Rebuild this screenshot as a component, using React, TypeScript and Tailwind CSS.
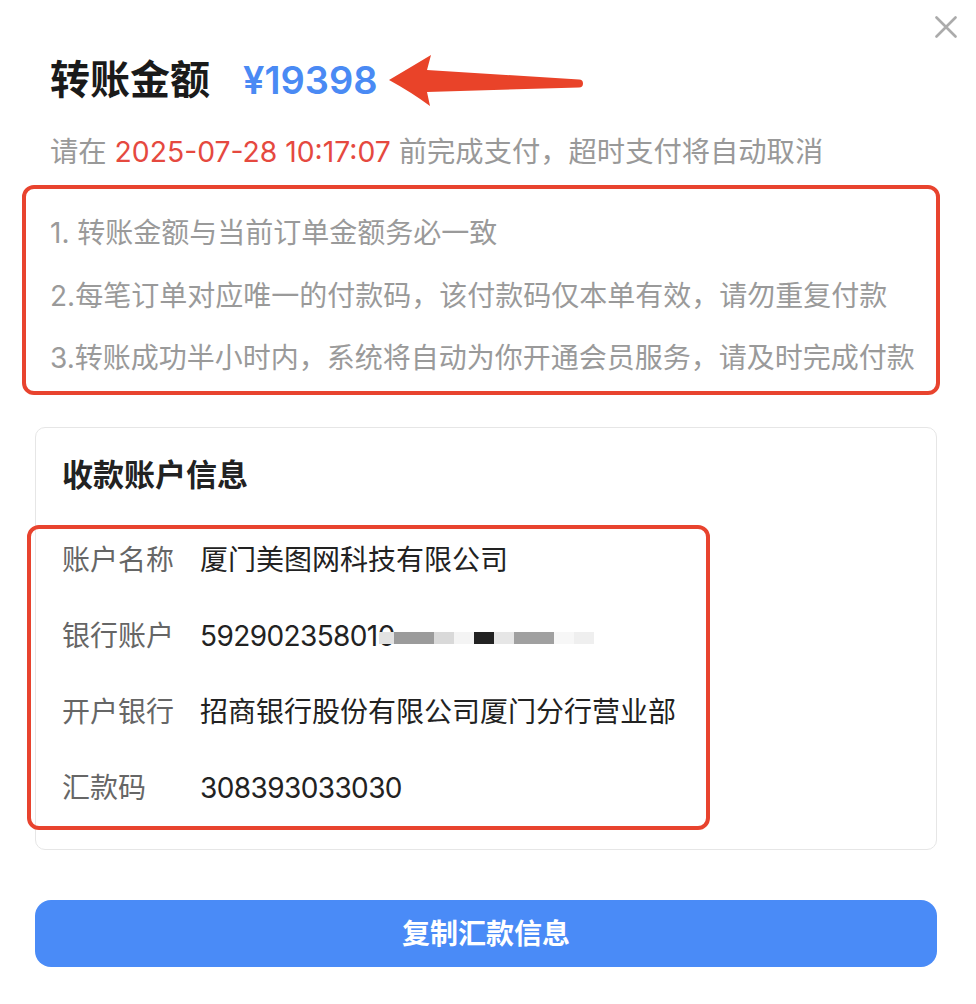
/** Bank transfer payment dialog with annotation boxes. */
const FONT = "font-['Inter','Noto_Sans_CJK_SC',sans-serif]";

const notes = [
  "1. 转账金额与当前订单金额务必一致",
  "2.每笔订单对应唯一的付款码，该付款码仅本单有效，请勿重复付款",
  "3.转账成功半小时内，系统将自动为你开通会员服务，请及时完成付款",
];

const mosaic = [
  { w: 15, c: "bg-[#e2e2e2]" },
  { w: 40, c: "bg-[#9b9b9b]" },
  { w: 20, c: "bg-[#d9d9d9]" },
  { w: 20, c: "bg-[#f4f4f4]" },
  { w: 20, c: "bg-[#222222]" },
  { w: 20, c: "bg-[#e6e6e6]" },
  { w: 40, c: "bg-[#a0a0a0]" },
  { w: 20, c: "bg-[#f7f7f7]" },
  { w: 20, c: "bg-[#efefef]" },
];

function Arrow() {
  return (
    <svg width="196" height="52" viewBox="0 0 196 52" className="ml-[9px] mt-[2px] shrink-0">
      <path
        d="M2 25 Q24 12 44 0 L40 15 L192 24.5 A4 4 0 0 1 192 32.5 L40 37 L43 51 Q24 37 2 25 Z"
        fill="#e94329"
      />
    </svg>
  );
}

function Row({ label, children }: { label: string; children: React.ReactNode }) {
  return (
    <div className="flex h-[40px] items-center text-[28px] leading-[40px]">
      <span className="w-[138px] shrink-0 text-[#666666]">{label}</span>
      <span className="text-[#222222]">{children}</span>
    </div>
  );
}

export default function App() {
  return (
    <div className={`relative h-[1004px] w-[976px] overflow-hidden bg-white ${FONT}`}>
      <button className="absolute right-[19px] top-[16px]">
        <svg width="22" height="22" viewBox="0 0 22 22">
          <path d="M1.5 1.5 L20.5 20.5 M20.5 1.5 L1.5 20.5" stroke="#ababab" strokeWidth="2.6" strokeLinecap="round" />
        </svg>
      </button>

      <div className="flex flex-col pl-[22px] pr-[36px] pt-[56px]">
        {/* amount */}
        <div className="ml-[28px] flex h-[48px] items-center">
          <span className="text-[40px] font-bold leading-[48px] text-[#1a1a1a]">转账金额</span>
          <span className="ml-[33px] text-[38px] font-semibold leading-[48px] text-[#4a8af4]">¥19398</span>
          <Arrow />
        </div>

        <div className="ml-[28px] mt-[28px] text-[28.3px] leading-[40px] text-[#999999]">
          请在 <span className="text-[#e5493f]">2025-07-28 10:17:07</span> 前完成支付，超时支付将自动取消
        </div>

        {/* notes */}
        <div className="mt-[13px] flex flex-col gap-[22.5px] rounded-[12px] border-4 border-[#e8432e] pb-[13px] pl-[24px] pt-[24px]">
          {notes.map((n) => (
            <div key={n} className="text-[28px] leading-[40px] text-[#9a9a9a]">
              {n}
            </div>
          ))}
        </div>

        {/* account card */}
        <div className="ml-[13px] mr-[3px] mt-[32px] flex flex-col rounded-[10px] border border-[#e6e6e6] pb-[19px] pt-[27px]">
          <div className="pl-[26px] text-[31px] font-bold leading-[40px] text-[#222222]">收款账户信息</div>
          <div className="-ml-[9px] mt-[30px] flex w-[683px] flex-col gap-[36px] rounded-[12px] border-4 border-[#e8432e] pb-[18px] pl-[31px] pt-[11px]">
            <Row label="账户名称">厦门美图网科技有限公司</Row>
            <Row label="银行账户">
              <span className="inline-flex items-center tracking-[-0.6px]">
                592902358010
                <span className="-ml-[16px] mt-[4px] flex h-[12px]">
                  {mosaic.map((m, i) => (
                    <span key={i} className={`h-full ${m.c}`} style={{ width: m.w }} />
                  ))}
                </span>
              </span>
            </Row>
            <Row label="开户银行">招商银行股份有限公司厦门分行营业部</Row>
            <Row label="汇款码">
              <span className="tracking-[-0.6px]">308393033030</span>
            </Row>
          </div>
        </div>

        <button className="ml-[13px] mr-[3px] mt-[50px] flex h-[67px] items-center justify-center rounded-[16px] bg-[#4a8bf7] text-[28px] font-bold text-white">
          复制汇款信息
        </button>
      </div>
    </div>
  );
}
